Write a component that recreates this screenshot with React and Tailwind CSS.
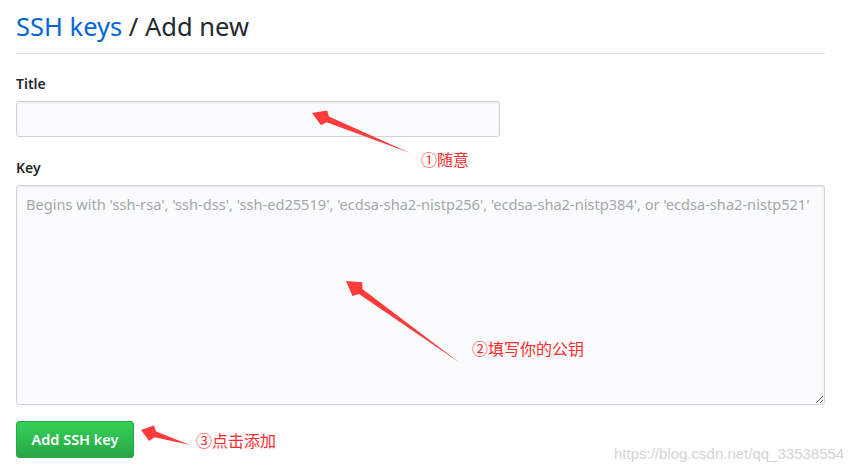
import React from "react";

const arrows = [
  { tip: [312, 113], tail: [410, 153], head: 17, hw: 8, sw: 3 },
  { tip: [346, 281], tail: [460, 363], head: 18, hw: 8.5, sw: 3 },
  { tip: [141, 430], tail: [190, 445], head: 15, hw: 8, sw: 3 },
];

function arrowPoints({ tip, tail, head, hw, sw }) {
  const dx = tail[0] - tip[0];
  const dy = tail[1] - tip[1];
  const len = Math.hypot(dx, dy);
  const ux = dx / len;
  const uy = dy / len;
  const px = -uy;
  const py = ux;
  const bx = tip[0] + ux * head;
  const by = tip[1] + uy * head;
  const nx = tip[0] + ux * (head - 4);
  const ny = tip[1] + uy * (head - 4);
  const pts = [
    tip,
    [nx + px * hw, ny + py * hw],
    [bx + px * sw, by + py * sw],
    tail,
    [bx - px * sw, by - py * sw],
    [nx - px * hw, ny - py * hw],
  ];
  return pts.map((p) => p.map((v) => v.toFixed(1)).join(",")).join(" ");
}

function Note({ className, children }) {
  return (
    <div className={"absolute text-[16px] leading-[20px] text-[#ff2a2a] font-['Noto_Sans_CJK_SC',sans-serif] " + className}>
      {children}
    </div>
  );
}

export default function App() {
  return (
    <div className="relative w-[866px] h-[473px] bg-white overflow-hidden font-['Noto_Sans',sans-serif] text-[#24292e]">
      <div className="pl-4 w-[825px] pt-[11px] flex flex-col">
        <h1 className="text-[25.5px] leading-[30px] pb-[12px] border-b border-[#e1e4e8] font-normal">
          <span className="text-[#0366d6]">SSH keys</span> / Add new
        </h1>

        <div className="mt-[20px] flex flex-col gap-[7px]">
          <label className="text-[14px] font-semibold leading-[20px]">Title</label>
          <input
            type="text"
            className="w-[484px] h-[36px] rounded-[3px] border border-[#d1d5da] bg-[#fafbfc] shadow-[inset_0_1px_2px_rgba(27,31,35,0.075)] outline-none"
          />
        </div>

        <div className="mt-[21px] flex flex-col gap-[7px]">
          <label className="text-[14px] font-semibold leading-[20px]">Key</label>
          <textarea
            className="w-[809px] h-[220px] rounded-[3px] border border-[#d1d5da] bg-[#fafbfc] px-[9px] py-[8px] text-[14.6px] leading-[20px] placeholder:text-[#a5a8ab] outline-none resize-y shadow-[inset_0_1px_2px_rgba(27,31,35,0.075)]"
            placeholder="Begins with 'ssh-rsa', 'ssh-dss', 'ssh-ed25519', 'ecdsa-sha2-nistp256', 'ecdsa-sha2-nistp384', or 'ecdsa-sha2-nistp521'"
          />
        </div>

        <button className="mt-[16px] w-[118px] h-[37px] rounded-[3px] border border-[#28a745] bg-gradient-to-b from-[#34d058] to-[#28a745] text-white text-[14.5px] font-semibold">
          Add SSH key
        </button>
      </div>

      <svg className="absolute inset-0 pointer-events-none" width="866" height="473">
        {arrows.map((a, i) => (
          <polygon key={i} points={arrowPoints(a)} fill="#ff3b3b" />
        ))}
      </svg>

      <Note className="left-[421px] top-[149px]">①随意</Note>
      <Note className="left-[472px] top-[338px]">②填写你的公钥</Note>
      <Note className="left-[196px] top-[430px]">③点击添加</Note>

      <div className="absolute left-[614px] top-[444px] text-[15px] leading-[20px] text-[#d4d4d4] font-['Liberation_Sans',sans-serif]">
        https://blog.csdn.net/qq_33538554
      </div>
    </div>
  );
}
